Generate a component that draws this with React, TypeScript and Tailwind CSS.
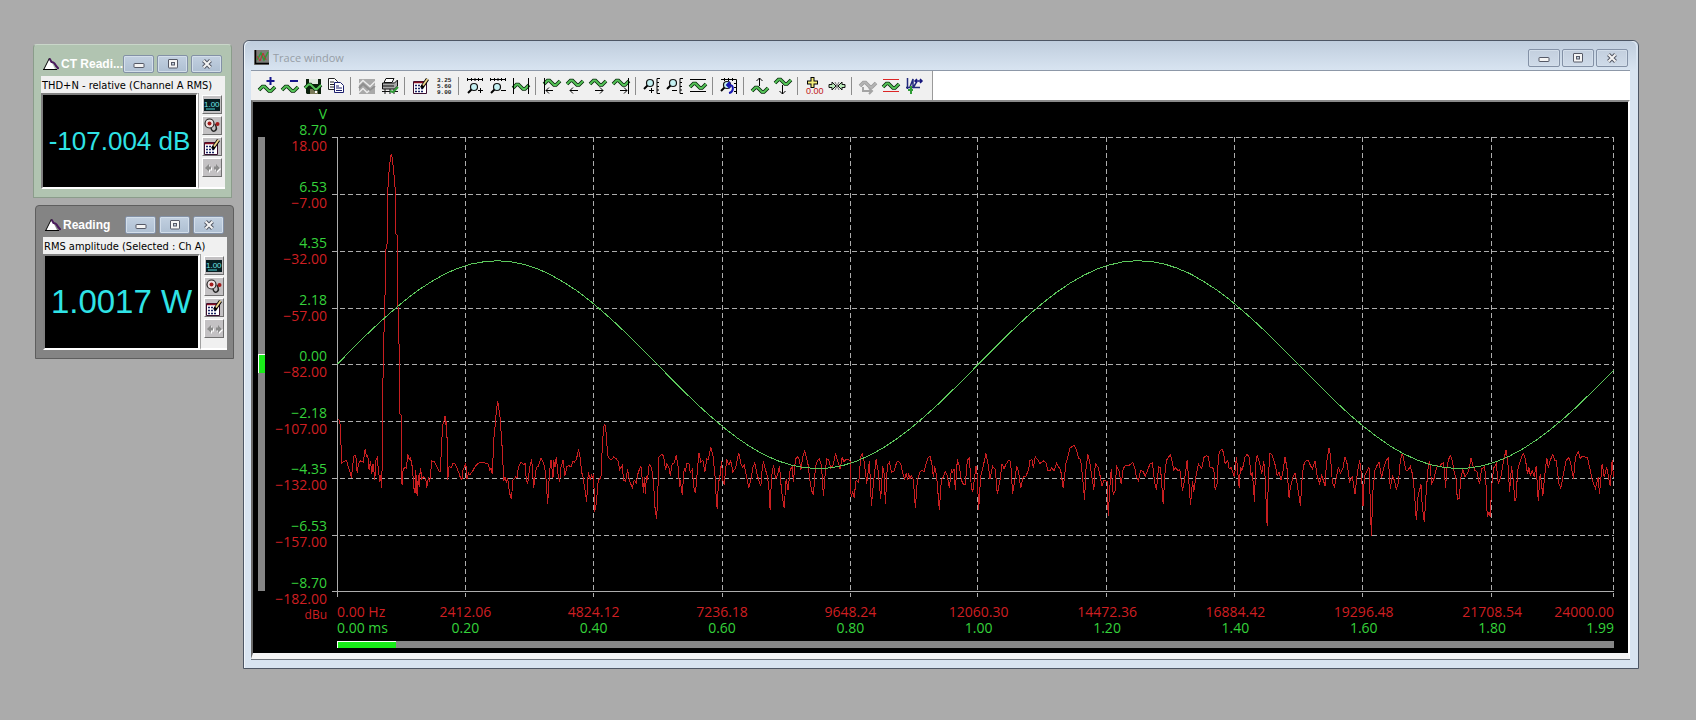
import type { ReactNode } from "react";
import { clsx } from "clsx";

const Y_TICKS = [
  ["8.70", "18.00"],
  ["6.53", "−7.00"],
  ["4.35", "−32.00"],
  ["2.18", "−57.00"],
  ["0.00", "−82.00"],
  ["−2.18", "−107.00"],
  ["−4.35", "−132.00"],
  ["−6.53", "−157.00"],
  ["−8.70", "−182.00"],
];

const X_TICKS = [
  ["0.00 Hz", "0.00 ms"],
  ["2412.06", "0.20"],
  ["4824.12", "0.40"],
  ["7236.18", "0.60"],
  ["9648.24", "0.80"],
  ["12060.30", "1.00"],
  ["14472.36", "1.20"],
  ["16884.42", "1.40"],
  ["19296.48", "1.60"],
  ["21708.54", "1.80"],
  ["24000.00", "1.99"],
];

const SPECTRUM = [
  {
    origin: "translate(-21 729)",
    points:
      "22,118 28,120 30,160 34,248 40,244 48,240 52,256 58,272 63,292 66,262 70,228 76,224 80,278 84,250 90,242 98,246 104,208 108,228 112,226 116,270 120,242 124,280 128,250 133,300 136,240 140,232 144,268 148,306 151,284 154,322 156,180 157,30 160,-128 163,-200 164,-280 166,-390 170,-410 170,-540 172,-570 175,-620 180,-670 183,-680 186,-665 190,-620 193,-600 195,-540 196,-440 200,-435 201,-340 203,-200 206,-100 208,30 208,100 212,104 212,280 215,314 218,268 224,262 228,264 232,220 236,238 240,232 246,262 250,322 254,338 256,270 260,346 264,284 266,320 270,262 274,296 280,290 286,296 289,322 294,292 298,304 304,242 312,244 318,256 326,272 330,274 334,180 338,128 341,122 344,106 346,130 349,124 352,298 356,258 362,264 368,248 374,252 380,264 386,280 392,298 396,294 398,268 402,260 406,248 410,296 414,278 418,284 426,274 436,256 446,248 458,246 468,250 474,252 478,270 482,264 486,282 490,180 495,130 498,90 502,62 506,90 509,110 514,180 517,230 520,302 524,290 528,306 532,296 538,340 543,356 548,300 556,290 560,292 564,260 572,246 580,254 584,250 588,300 592,310 598,262 604,238 610,322 618,262 624,258 632,234 640,248 646,280 652,372 658,270 662,240 668,292 670,240 674,260 678,230 684,290 688,304 692,262 698,240 704,286 710,258 716,256 722,260 728,242 732,246 738,238 745,208 750,236 754,276 758,290 764,330 769,364 774,276 780,300 784,284 788,292 790,280 793,394 798,370 804,300 812,292 816,200 820,140 824,132 828,160 832,226 838,236 844,238 850,230 858,236 864,244 868,268 876,256 880,300 886,304 892,268 898,302 906,322 912,300 918,308 924,276 932,258 940,338 942,290 946,342 948,290 952,296 957,252 964,262 970,310 974,380 979,416 982,360 986,230 994,222 1000,228 1006,270 1010,250 1016,262 1020,286 1026,250 1032,248 1038,224 1044,262 1048,320 1050,300 1056,344 1062,264 1066,272 1070,250 1076,250 1080,276 1086,268 1092,328 1096,338 1100,290 1106,218 1112,246 1118,240 1124,274 1130,236 1134,238 1142,202 1148,224 1154,280 1158,350 1161,386 1165,300 1168,300 1174,242 1178,300 1182,314 1186,270 1190,238 1196,254 1202,242 1208,274 1216,264 1222,234 1226,218 1232,250 1238,262 1242,254 1248,284 1256,322 1262,300 1268,262 1274,248 1280,280 1286,300 1292,318 1296,268 1300,244 1306,268 1312,290 1316,320 1320,390",
  },
  {
    origin: "translate(1299 819)",
    points:
      "0,300 4,200 10,164 16,204 22,196 28,166 34,240 42,294 48,206 54,240 60,178 66,170 70,214 76,146 82,140 88,148 92,180 98,140 104,122 110,146 114,164 118,200 124,240 130,254 136,170 142,150 148,146 154,166 160,258 166,180 170,146 176,150 182,174 188,166 192,150 196,130 202,150 210,176 216,142 222,154 228,146 234,148 240,152 243,260 248,246 252,262 258,210 266,216 272,140 276,130 282,152 290,220 298,152 304,286 312,200 318,148 324,180 332,266 338,168 342,190 346,280 352,164 358,156 364,186 372,182 380,156 386,154 392,160 398,190 404,206 408,190 412,206 416,192 420,206 424,196 430,210 436,294 442,210 450,184 456,180 462,184 468,160 474,142 480,138 486,164 490,200 494,168 500,200 504,250 508,298 514,210 520,200 526,184 532,196 538,234 544,178 548,186 552,176 556,240 562,148 568,166 574,210 580,222 586,222 592,150 598,144 604,230 608,246 614,200 618,166 622,200 626,298 632,200 640,166 648,130 654,160 660,206 668,168 676,178 682,252 690,210 696,160 702,176 708,162 716,150 722,154 728,250 734,214 740,168 746,184 752,234 760,200 768,198 776,178 780,150 786,148 790,172 796,140 804,150 810,160 820,152 828,158 834,180 840,182 846,172 852,182 860,160 866,170 872,178 880,234 888,160 894,140 900,114 908,108 914,106 920,120 926,144 932,148 938,200 944,268 948,180 954,132 960,160 966,200 972,238 976,160 984,170 990,194 996,228 1002,210 1008,212 1012,214 1015,318 1020,230 1024,176 1030,252 1036,240 1040,166 1048,184 1054,222 1060,176 1066,166 1076,166 1082,162 1088,156 1094,170 1100,202 1106,212 1112,180 1120,184 1126,198 1132,184 1140,162 1148,158 1154,216 1160,240 1166,170 1172,172 1180,282 1186,180 1190,150 1196,140 1202,134 1206,150 1212,180 1218,172 1224,182 1230,178 1238,242 1244,210 1252,150 1256,200 1262,284 1268,212 1272,244 1278,200 1286,160 1290,168",
  },
  {
    origin: "translate(2589 819)",
    points:
      "0,168 6,174 12,142 20,136 26,140 30,170 36,172 42,176 46,240 52,220 56,134 62,120 68,118 72,132 76,160 84,150 88,176 94,172 104,200 110,140 118,232 122,170 126,180 130,168 136,140 142,132 148,140 154,196 158,186 164,274 168,160 172,136 178,152 186,190 192,152 196,200 202,346 206,200 210,130 216,132 222,150 228,170 232,196 238,186 244,210 250,180 256,140 262,176 268,264 272,230 280,200 286,190 292,220 302,286 308,190 314,156 320,152 326,150 332,166 338,176 346,152 352,196 360,220 366,196 372,214 376,226 380,160 388,112 392,136 398,216 404,230 410,200 416,170 422,190 430,172 436,140 442,160 450,214 458,200 466,252 474,180 480,150 486,200 490,288 494,200 500,186 508,172 511,250 515,376 520,240 526,180 532,166 538,156 546,204 552,172 560,150 566,144 572,236 578,196 584,210 590,236 596,220 602,150 608,128 612,146 618,178 624,182 632,168 638,190 644,240 650,330 656,250 660,240 664,222 668,290 674,336 680,240 686,166 690,152 696,220 702,210 708,184 714,166 720,170 726,160 732,158 738,232 742,170 746,150 752,136 758,150 764,186 770,210 773,268 779,264 784,200 790,178 796,200 804,188 810,170 814,144 820,166 826,180 832,184 840,222 846,176 854,170 858,190 863,320 868,306 872,320 876,230 882,174 890,160 896,220 904,200 912,150 920,118 926,170 930,246 936,168 940,200 946,272 950,262 954,180 960,160 966,140 972,130 978,150 984,192 988,170 992,196 998,180 1004,198 1010,166 1016,272 1022,190 1030,256 1038,170 1042,144 1046,172 1052,150 1060,132 1066,150 1070,150 1078,220 1084,234 1092,190 1100,150 1108,142 1114,162 1122,206 1128,140 1136,124 1142,144 1148,138 1156,140 1164,142 1170,170 1178,210 1188,234 1196,200 1200,252 1208,160 1214,200 1222,172 1232,228 1238,150 1242,200",
  },
];

// 1 kHz sine, 48 samples per cycle, same units as the spectrum
const SINE = Array.from({ length: 97 }, (_, i) => {
  const x = Math.min(i * 40, 3831);
  const y = 682 - 312 * Math.sin((2 * Math.PI * (x + 2)) / 1925);
  return `${x},${Math.round(y)}`;
}).join(" ");

const PLOT_W = 1277;
const PLOT_H = 454;

function Plot() {
  const columns = X_TICKS.map((_, i) => 5.5 + Math.floor(Math.min(i / 9.95, 1) * PLOT_W));
  const rows = Y_TICKS.map((_, i) => 0.5 + Math.ceil((i / 8) * PLOT_H));
  return (
    <svg
      className="block min-h-0 w-full flex-1"
      viewBox="0 0 1283 461"
      preserveAspectRatio="none"
      role="img"
      aria-label="Spectrum and waveform traces"
    >
      <g stroke="#adadad" strokeWidth="1" shapeRendering="crispEdges">
        {rows.map((y, i) => (
          <line key={y} x1="0" x2="1283" y1={y} y2={y} strokeDasharray={i === 8 ? undefined : "5 3"} vectorEffect="non-scaling-stroke" />
        ))}
        {columns.map((x, i) => (
          <line key={x} x1={x} x2={x} y1="0" y2="460" strokeDasharray={i === 0 ? undefined : "5 3"} vectorEffect="non-scaling-stroke" />
        ))}
      </g>
      <g transform="translate(5.5 .5) scale(.33333)" fill="none" shapeRendering="crispEdges">
        {SPECTRUM.map((s) => (
          <g key={s.origin} transform={s.origin}>
            <polyline points={s.points} stroke="#c81e20" strokeWidth="1" vectorEffect="non-scaling-stroke" />
          </g>
        ))}
        <polyline points={SINE} stroke="#5cc85c" strokeWidth="1" vectorEffect="non-scaling-stroke" />
      </g>
    </svg>
  );
}

function Wave({ y = 0, color = "#55c458", edge = "#06280a" }: { y?: number; color?: string; edge?: string }) {
  const d = "M1 11L4.500 7.500H6.500L11 12H13L17 8";
  return (
    <g transform={`translate(0 ${y})`} fill="none">
      <path d={d} stroke={edge} strokeWidth="3.600" />
      <path d={d} stroke={color} strokeWidth="1.800" />
    </g>
  );
}

function Glyph({ children }: { children: ReactNode }) {
  return (
    <svg className="h-[18px] w-[18px] overflow-visible" viewBox="0 0 18 18" aria-hidden="true">
      {children}
    </svg>
  );
}

function Line({ d, color = "#000", w = 1 }: { d: string; color?: string; w?: number }) {
  return <path d={d} fill="none" stroke={color} strokeWidth={w} />;
}

function Lens({ x, y }: { x: number; y: number }) {
  return (
    <g transform={`translate(${x} ${y})`}>
      <path d="M3.500 7.500L0 11" stroke="#000" strokeWidth="2" />
      <circle cx="6" cy="5" r="3.500" fill="#c4f0f2" stroke="#111" strokeWidth="1.200" />
    </g>
  );
}

function Notepad() {
  return (
    <>
      <path d="M1.500 4.500h13v12h-13z" fill="#fff" stroke="#3a1030" />
      <path d="M2 5.500h9" stroke="#8a1022" strokeWidth="1.500" />
      <path d="M3 8.500h9M3 11.500h9M3 14.500h9" stroke="#1b2466" strokeWidth="1.500" strokeDasharray="2 1" />
      <path d="M9.500 11L15.500 2" stroke="#000" strokeWidth="3.500" />
      <path d="M11 8.500L15.500 2" stroke="#f1d58c" strokeWidth="1.800" />
    </>
  );
}

const TOOL_GROUPS: { label: string; icon: ReactNode }[][] = [
  [
    { label: "Add trace", icon: <><Wave y={2} /><Line d="M12.500 0v8M8.500 4h8" color="#14148c" w={2} /></> },
    { label: "Remove trace", icon: <><Wave y={2} /><Line d="M9 4h8" color="#14148c" w={2} /></> },
    {
      label: "Save",
      icon: (
        <>
          <path d="M2 2h15v15H3l-1-1z" fill="#0b200c" />
          <path d="M5 2h9v5H5z" fill="#dfe9df" />
          <path d="M6 12h8v5H6z" fill="#7b7b5a" />
          <path d="M11 13h2v3h-2z" fill="#fff" />
          <Wave />
        </>
      ),
    },
    {
      label: "Copy",
      icon: (
        <>
          <path d="M1.500 1.500h6l3 3v8h-9z" fill="#fff" stroke="#222" />
          <path d="M3 5h4M3 7.500h5M3 10h4" stroke="#222" />
          <path d="M7.500 5.500h6l3 3v7h-9z" fill="#fff" stroke="#1c1f6e" />
          <path d="M9 9h3M9 11h6M9 13.500h6" stroke="#1c1f6e" />
        </>
      ),
    },
  ],
  [
    {
      label: "Overlay",
      icon: (
        <>
          <path d="M1 2h16v15H1z" fill="#a9a9a9" />
          <path d="M1 7.500l4-4 7 6 5-5M1 15.500l4-4 4 4 8-7" fill="none" stroke="#ededed" strokeWidth="1.300" />
          <path d="M1 11l4-4 7 6 5-4" fill="none" stroke="#8f8f8f" strokeWidth="2" />
        </>
      ),
    },
    {
      label: "Print",
      icon: (
        <>
          <path d="M5 1.500h8l-2 4H3z" fill="#fff" stroke="#111" />
          <path d="M1.500 6h12l3-3v6l-3 3h-12z" fill="#a8a8a8" stroke="#111" />
          <path d="M2 9h11" stroke="#111" />
          <path d="M1 14.500h16M4 12v5M9 12v5M13 12v5" fill="none" stroke="#111" />
          <path d="M9 14l3 1 5-5" fill="none" stroke="#2f9c36" strokeWidth="2" />
        </>
      ),
    },
  ],
  [
    { label: "Edit settings", icon: <Notepad /> },
    {
      label: "Show values",
      icon: (
        <g fontFamily="Liberation Mono, monospace" fontWeight="700" fontSize="6" fill="#222">
          <text x="2" y="5">3.25</text>
          <text x="2" y="11">5.60</text>
          <text x="2" y="17">9.00</text>
        </g>
      ),
    },
  ],
  [
    { label: "Zoom in X", icon: <><Line d="M1 2.500h16M1.500 1v3M5.500 1v3M9 1v3M12.500 1v3M16.500 1v3" /><Lens x={2} y={5} /><Line d="M12 13.500h5M14.500 11v5" /></> },
    { label: "Zoom out X", icon: <><Line d="M1 2.500h16M1.500 1v3M5.500 1v3M9 1v3M12.500 1v3M16.500 1v3" /><Lens x={2} y={5} /><Line d="M12 13.500h5" /></> },
    { label: "Fit X", icon: <><Wave /><Line d="M1.500 1v16M16.500 1v16" /></> },
  ],
  [
    { label: "Scroll to start", icon: <><Wave y={-4} /><Line d="M1.500 1v16M3 13.500h7M6 10.500l-3 3 3 3" /></> },
    { label: "Scroll left", icon: <><Wave y={-4} /><Line d="M4 13.500h8M7 10.500l-3 3 3 3" /></> },
    { label: "Scroll right", icon: <><Wave y={-4} /><Line d="M6 13.500h8M11 10.500l3 3-3 3" /></> },
    { label: "Scroll to end", icon: <><Wave y={-4} /><Line d="M16.500 1v16M8 13.500h7M12 10.500l3 3-3 3" /></> },
  ],
  [
    { label: "Zoom in Y", icon: <><Lens x={1} y={1} /><Line d="M6 13.500h5M8.500 11v5M17 1.500h-3v15h3M14 5.500h2M14 9.500h2M14 13h2" /></> },
    { label: "Zoom out Y", icon: <><Lens x={1} y={1} /><Line d="M6 13.500h5M17 1.500h-3v15h3M14 5.500h2M14 9.500h2M14 13h2" /></> },
    { label: "Fit Y", icon: <><Wave y={-1} /><Line d="M1 2.500h16M1 14.500h16" /></> },
  ],
  [
    {
      label: "Zoom previous",
      icon: (
        <>
          <Line d="M1 2.500h15.500V17M4.500 1v3M8.500 1v3M12.500 1v3M14 6.500h3M14 10.500h3M14 14.500h3" />
          <Lens x={1} y={3} />
          <Line d="M7 8h3c4 0 4 7-1 8M10 5L7 8l3 3" color="#1717b4" w={2} />
        </>
      ),
    },
  ],
  [
    { label: "Move up", icon: <><Wave y={3} /><Line d="M8.500 9V1M5.500 4l3-3 3 3" /></> },
    { label: "Move down", icon: <><Wave y={-5} /><Line d="M8.500 8v9M5.500 14l3 3 3-3" /></> },
  ],
  [
    {
      label: "Cursor readout",
      icon: (
        <>
          <Line d="M7.500 0v11M2 5.500h11" w={4} />
          <Line d="M7.500 1v9M3 5.500h9" color="#f4ee7a" w={2} />
          <text x="1" y="17" fontFamily="Liberation Sans, sans-serif" fontSize="9" fill="#c01818">0.00</text>
        </>
      ),
    },
    {
      label: "Snap cursors",
      icon: (
        <>
          <path d="M1 7.500h3V5l4 4-4 4v-2.500H1zM17 7.500h-3V5l-4 4 4 4v-2.500h3z" fill="#b8e8b8" stroke="#111" />
          <Line d="M7 5l4 8M11 5l-4 8" color="#777" />
        </>
      ),
    },
  ],
  [
    { label: "Redraw", icon: <><Wave y={-2} color="#b4b4b4" edge="#9a9a9a" /><Line d="M4 10v4h8M10 11l3 3-3 3" color="#a4a4a4" w={2} /></> },
    { label: "Limits", icon: <><Wave y={-1} /><Line d="M1 2.500h16M1 14.500h16" color="#dc2626" /></> },
    {
      label: "Measure",
      icon: (
        <>
          <Line d="M2.500 1v11M1 10.500h14M5 10l3-8v9M8 11l3-5" color="#222a7c" w={1.5} />
          <Line d="M3 13h5M6 9v8" color="#2f9c36" w={2} />
          <Line d="M10 4h7M12 2l-2 2 2 2M15 2l2 2-2 2" color="#15157c" w={1.5} />
        </>
      ),
    },
  ],
];

function CaptionButtons({ small = false }: { small?: boolean }) {
  const button = clsx(
    "grid h-[18px] place-items-center rounded-xs border border-[#8391a6] shadow-[inset_0_0_0_1px_#d3deea]",
    small ? "w-[31px] bg-linear-to-b from-[#c2d0e0] to-[#aebfd2]" : "w-8 bg-linear-to-b from-[#c3cfde] to-[#cfdbe9]",
  );
  return (
    <div className={clsx("flex shrink-0", small ? "gap-[3px]" : "gap-0.5")}>
      <button className={button} aria-label="Minimize">
        <svg width="12" height="10" viewBox="0 0 12 10">
          <rect x="1" y="4.500" width="10" height="4" rx=".5" fill="#f4f4f4" stroke="#555966" />
        </svg>
      </button>
      <button className={button} aria-label="Maximize">
        <svg width="12" height="10" viewBox="0 0 12 10">
          <rect x="1.500" y=".5" width="9" height="8.500" rx=".5" fill="#f4f4f4" stroke="#555966" />
          <rect x="4.500" y="3.500" width="3" height="2.500" fill="#c3cfde" stroke="#555966" />
        </svg>
      </button>
      <button className={button} aria-label="Close">
        <svg width="12" height="10" viewBox="0 0 12 10">
          <path d="M2.500 1.500l7 7M9.500 1.500l-7 7" stroke="#555966" strokeWidth="4" />
          <path d="M2.500 1.500l7 7M9.500 1.500l-7 7" stroke="#f4f4f4" strokeWidth="2" />
        </svg>
      </button>
    </div>
  );
}

function Logo() {
  return (
    <svg className="h-[14px] w-4 shrink-0" viewBox="0 0 16 14" aria-hidden="true">
      <path d="M6.500 1L12 12H1z" fill="#fff" />
      <path d="M0 12.500h14M6.500 1L1 12" fill="none" stroke="#000" />
      <path d="M6.500 1.500l2 3.500c2 0 3 1 4 3s2 2 3 4" fill="none" stroke="#4a1a5c" strokeWidth="2" />
    </svg>
  );
}

const METER_TOOLS = [
  {
    label: "Display",
    icon: (
      <>
        <path d="M1 3h16v12H1z" fill="#071c20" />
        <text x="1" y="10.500" fontFamily="Liberation Sans, sans-serif" fontSize="8" fill="#6fe3e8">1.00</text>
        <Line d="M3 13h9" color="#4fd3d8" />
      </>
    ),
  },
  {
    label: "Alarm",
    icon: (
      <>
        <circle cx="6.500" cy="6.500" r="4.500" fill="#eee3e3" stroke="#222" strokeWidth="1.200" />
        <circle cx="6.500" cy="6.500" r="2" fill="#a31c1c" />
        <path d="M8 11c1 6 8 3 4-4" fill="none" stroke="#222" strokeWidth="1.500" />
        <circle cx="14.500" cy="7" r="2" fill="#a31c1c" />
      </>
    ),
  },
  { label: "Settings", icon: <Notepad /> },
  {
    label: "Resize",
    icon: (
      <>
        <path d="M2 9l4-4v2.500h2v3H6V13zM17 9l-4-4v2.500h-2v3h2V13z" fill="#fff" transform="translate(1 1)" />
        <path d="M2 9l4-4v2.500h2v3H6V13zM17 9l-4-4v2.500h-2v3h2V13z" fill="#8b8b8b" />
      </>
    ),
  },
];

type MeterProps = {
  title: string;
  caption: string;
  value: string;
  frameClass: string;
  valueClass: string;
};

function Meter({ title, caption, value, frameClass, valueClass }: MeterProps) {
  return (
    <section className={clsx("rounded-t-sm border pr-1.5 pb-2 pl-[7px]", frameClass)}>
      <header className="flex h-[31px] items-center justify-between pt-1.5 pr-[3px] pl-0.5">
        <div className="flex min-w-0 items-center gap-0.5">
          <Logo />
          <h2 className="text-xs leading-4 font-bold whitespace-nowrap text-white">{title}</h2>
        </div>
        <CaptionButtons small />
      </header>
      <div className="bg-[#f0f0f0]">
        <p className="h-[17px] pl-px font-['DejaVu_Sans_Condensed','Open_Sans',sans-serif] text-[11px] leading-[19px] whitespace-nowrap text-black">
          {caption}
        </p>
        <div className="flex h-24">
          <output
            className={clsx(
              "grid flex-1 place-items-center border-2 border-t-[#808080] border-r-white border-b-white border-l-[#808080] bg-black whitespace-nowrap text-[#2fe3e6]",
              valueClass,
            )}
          >
            {value}
          </output>
          <div className="flex w-[27px] flex-col gap-0.5 border-b-2 border-l border-b-white border-l-[#a0a0a0] pt-0.5 pl-[3px]">
            {METER_TOOLS.map((t) => (
              <button
                key={t.label}
                aria-label={t.label}
                className="grid h-[19px] w-5 place-items-center border border-t-white border-r-[#707070] border-b-[#707070] border-l-white bg-[#c3c1c3]"
              >
                <Glyph>{t.icon}</Glyph>
              </button>
            ))}
          </div>
        </div>
      </div>
    </section>
  );
}

function Toolbar() {
  return (
    <div className="flex h-[30px] border-t border-[#8d98a8] bg-white">
      <div className="flex items-center border-r border-[#9a9a9a] bg-[#f0f0f0] pr-[7px] pl-1" role="toolbar">
        {TOOL_GROUPS.map((group, i) => (
          <div key={i} className="flex items-center">
            {i > 0 && <span className="mr-1 ml-[3px] h-[18px] w-px bg-[#8c8c8c]" />}
            {group.map((tool) => (
              <button key={tool.label} aria-label={tool.label} className="grid h-6 w-[23px] place-items-center">
                <Glyph>{tool.icon}</Glyph>
              </button>
            ))}
          </div>
        ))}
      </div>
    </div>
  );
}

function XAxis({ row, className }: { row: 0 | 1; className: string }) {
  return (
    <div className={clsx("grid h-4 grid-cols-[minmax(0,10fr)_repeat(9,minmax(0,20fr))_minmax(0,9fr)]", className)}>
      {X_TICKS.map((t, i) => (
        <span key={t[row]} className={clsx("flex whitespace-nowrap", i === 0 ? "justify-start" : i === 10 ? "justify-end" : "justify-center")}>
          {t[row]}
        </span>
      ))}
    </div>
  );
}

function TraceWindow() {
  return (
    <section className="flex min-w-0 flex-1 flex-col rounded-t-md border border-[#4d5664] bg-[#d8e4f1] pr-2 pb-2 pl-[7px] shadow-[inset_1px_1px_0_#eef4fa]">
      <header className="-mx-1.5 flex h-[29px] items-center justify-between rounded-t-md bg-linear-to-b from-[#bfcddd] to-[#d8e4f1] pt-1 pr-2 pl-[9px]">
        <div className="flex items-center gap-1">
          <svg className="h-[15px] w-[15px]" viewBox="0 0 15 15" aria-hidden="true">
            <path d="M0 0h15v15H0z" fill="#7d7d78" />
            <path d="M1.500 0v13.500H15" fill="none" stroke="#000" strokeWidth="1.500" />
            <path d="M3 10l4-7 3 7 4-8" fill="none" stroke="#2f9c36" strokeWidth="1.500" />
            <path d="M3 6l3 5 3-8 3 7" fill="none" stroke="#b33" />
          </svg>
          <h1 className="font-['Open_Sans',sans-serif] text-[11px] leading-4 text-[#979ea6]">Trace window</h1>
        </div>
        <CaptionButtons />
      </header>
      <Toolbar />
      <div className="flex min-h-0 flex-1 border-t-2 border-r-2 border-b-[6px] border-l-2 border-t-[#8a8a8a] border-r-white border-b-[#f4f4f4] border-l-[#6a6a6a] bg-black pr-[14px] pl-[5px] font-['Open_Sans',sans-serif] text-sm leading-4">
        <div className="mt-[35px] mb-[62px] flex w-[7px] flex-col bg-[#868686]">
          <div className="flex-[217]" />
          <div className="h-[19px] border-t border-l border-white bg-[#19ec19]" />
          <div className="flex-[218]" />
        </div>
        <div className="mb-[30px] flex w-[62px] flex-col pt-1 text-right whitespace-nowrap text-[#35d23b]">
          <span className="h-4">V</span>
          <div className="flex flex-1 flex-col justify-between">
            {Y_TICKS.map(([volts, dbu]) => (
              <div key={volts} className="flex h-8 flex-col">
                <span>{volts}</span>
                <span className="text-[#cf1f22]">{dbu}</span>
              </div>
            ))}
          </div>
          <span className="h-4 text-xs leading-4 text-[#cf1f22]">dBu</span>
        </div>
        <div className="ml-[5px] flex min-w-0 flex-1 flex-col pt-[35px] pb-[5px]">
          <Plot />
          <div className="mt-1.5 ml-[5px]">
            <XAxis row={0} className="text-[#cf1f22]" />
            <XAxis row={1} className="text-[#35d23b]" />
            <div className="mt-[5px] h-[7px] bg-[#868686]">
              <div className="h-full w-[59px] border-t border-l border-white bg-[#19ec19]" />
            </div>
          </div>
        </div>
      </div>
      <div className="h-px bg-[#6d747c]" />
    </section>
  );
}

export default function App() {
  return (
    <main className="flex min-h-screen items-stretch bg-[#ababab] pt-10 pr-[57px] pb-[52px] pl-[33px] font-['Liberation_Sans',Arial,sans-serif]">
      <div className="mr-2 flex w-[202px] shrink-0 flex-col gap-[7px] pt-1">
        <Meter
          title="CT Readi..."
          caption="THD+N - relative (Channel A RMS)"
          value="-107.004 dB"
          frameClass="mr-[3px] border-[#8b9c8b] border-t-[#c9d6c9] bg-[#b1c4b1]"
          valueClass="text-[26px]"
        />
        <Meter
          title="Reading"
          caption="RMS amplitude (Selected : Ch A)"
          value="1.0017 W"
          frameClass="ml-0.5 mr-px border-[#5e5e5e] bg-[#848484]"
          valueClass="text-[33px]"
        />
      </div>
      <TraceWindow />
    </main>
  );
}
